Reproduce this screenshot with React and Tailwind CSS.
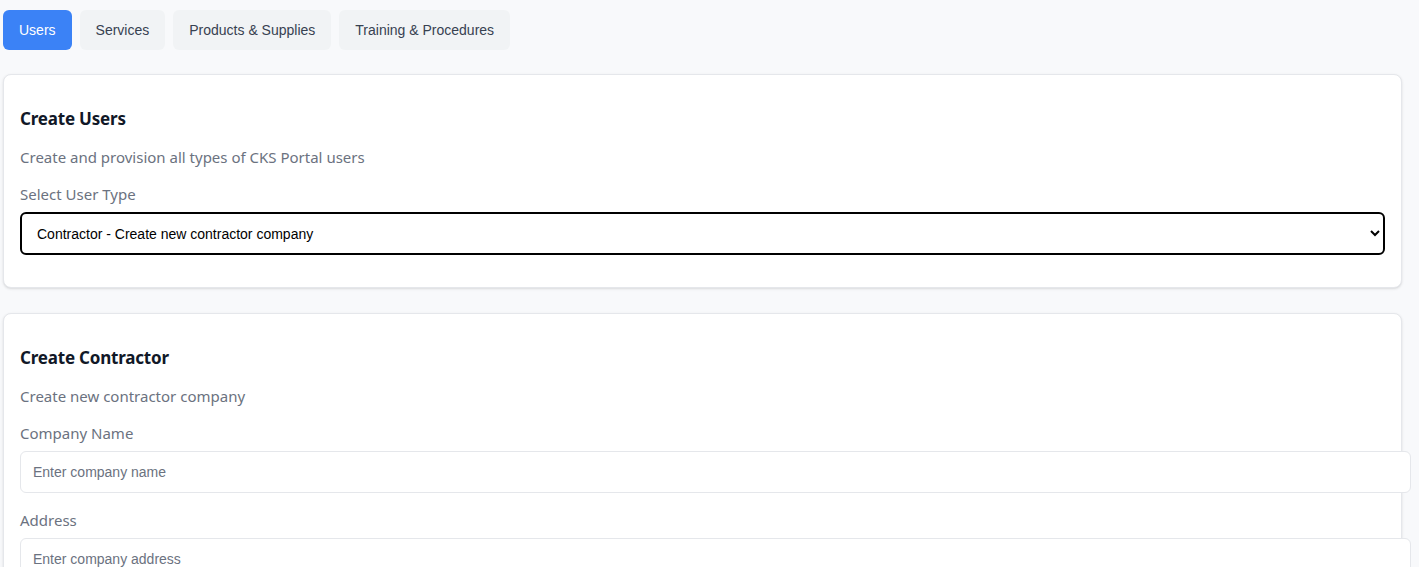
import React from "react";

const sans = "font-['Noto_Sans',sans-serif]";
const arial = "font-['Liberation_Sans',Arial,sans-serif]";

function Tab({ label, active }) {
  return (
    <button
      className={
        "h-10 px-4 rounded-md text-[14px] " +
        arial +
        (active ? " bg-[#3b82f6] text-white" : " bg-[#f1f3f5] text-[#374151]")
      }
    >
      {label}
    </button>
  );
}

function Label({ children }) {
  return (
    <label className={"block text-[15px] leading-[20px] text-[#6b7280] mb-2 " + sans}>
      {children}
    </label>
  );
}

function Card({ title, desc, children }) {
  return (
    <div className="bg-white border border-[#e5e7eb] rounded-lg shadow-sm px-4 pt-[32px] pb-8 mb-[25px]">
      <h3 className={"text-[17px] leading-[24px] font-bold tracking-[-0.2px] text-[#111827] mb-[16px] " + sans}>{title}</h3>
      <p className={"text-[15px] leading-[20px] text-[#6b7280] mb-[17px] " + sans}>{desc}</p>
      {children}
    </div>
  );
}

function TextInput({ placeholder }) {
  return (
    <input
      type="text"
      placeholder={placeholder}
      className={
        "block w-full box-content h-[16px] py-3 px-3 border border-[#e5e7eb] rounded-md bg-white text-[14px] text-black placeholder:text-[#6b7280] outline-none " +
        arial
      }
    />
  );
}

export default function App() {
  return (
    <div className="min-h-screen bg-[#f8f9fb] pt-[10px] pl-[3px] pr-[17px]">
      <div className="flex gap-2 mb-6">
        <Tab label="Users" active />
        <Tab label="Services" />
        <Tab label="Products & Supplies" />
        <Tab label="Training & Procedures" />
      </div>

      <Card title="Create Users" desc="Create and provision all types of CKS Portal users">
        <Label>Select User Type</Label>
        <select
          defaultValue="contractor"
          className={
            "block w-full h-[43px] pl-[11px] pr-3 border-2 border-black rounded-md bg-white text-[14px] text-black " + arial
          }
        >
          <option value="contractor">Contractor - Create new contractor company</option>
          <option value="manager">Manager</option>
        </select>
      </Card>

      <Card title="Create Contractor" desc="Create new contractor company">
        <div className="mb-[17px]">
          <Label>Company Name</Label>
          <TextInput placeholder="Enter company name" />
        </div>
        <div className="mb-[17px]">
          <Label>Address</Label>
          <TextInput placeholder="Enter company address" />
        </div>
      </Card>
    </div>
  );
}
